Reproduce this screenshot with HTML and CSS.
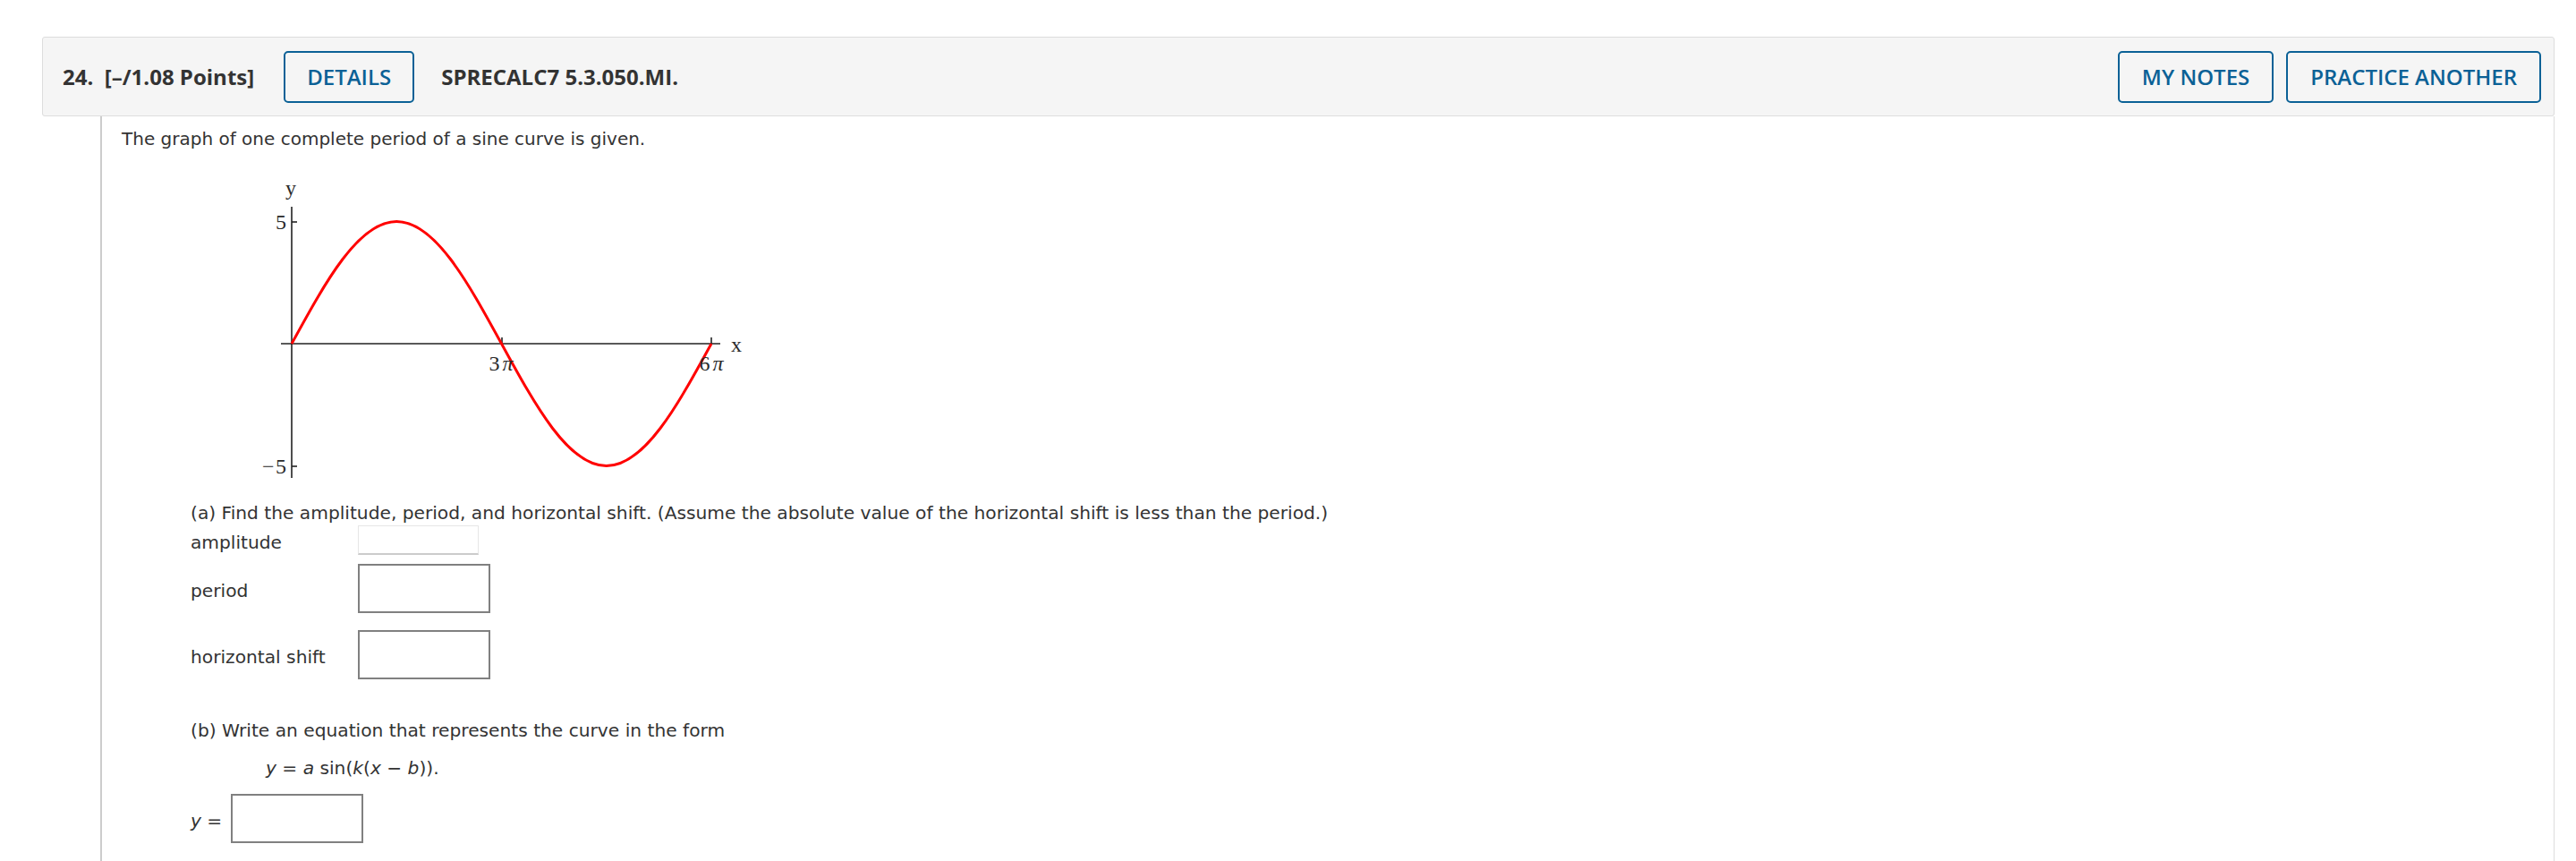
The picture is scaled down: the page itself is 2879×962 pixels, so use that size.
FILE: index.html
```html
<!DOCTYPE html>
<html lang="en">
<head>
<meta charset="utf-8">
<title>Question 24</title>
<link rel="stylesheet" href="styles.css">
</head>
<body>
<div class="question">
  <div class="qhead">
    <span class="qnum">24.&nbsp; [–/1.08 Points]</span>
    <button class="btn btn-details">DETAILS</button>
    <span class="qcode">SPRECALC7 5.3.050.MI.</span>
    <span class="spacer"></span>
    <button class="btn">MY NOTES</button>
    <button class="btn">PRACTICE ANOTHER</button>
  </div>
  <div class="qbody">
    <p class="intro">The graph of one complete period of a sine curve is given.</p>
    <svg class="graph" width="570" height="350" viewBox="0 0 570 350">
      <g class="axes">
        <line x1="46" y1="40" x2="46" y2="343"/>
        <line x1="34" y1="193" x2="525" y2="193"/>
        <line x1="46" y1="57" x2="52" y2="57"/>
        <line x1="46" y1="330" x2="52" y2="330"/>
        <line x1="281" y1="186" x2="281" y2="193"/>
        <line x1="515" y1="186" x2="515" y2="193"/>
      </g>
      <path class="curve" d="M46 193 C84.24 123.07 120.81 56.5 163.25 56.5 C205.69 56.5 242.26 123.07 280.5 193 C318.74 262.93 355.31 329.5 397.75 329.5 C440.19 329.5 476.76 262.93 515 193"/>
      <g class="labels">
        <text x="45" y="27" text-anchor="middle">y</text>
        <text x="40" y="65" text-anchor="end">5</text>
        <text x="13" y="338">−</text>
        <text x="40" y="338" text-anchor="end">5</text>
        <text x="280" y="223" text-anchor="middle">3<tspan class="pi" dx="3">π</tspan></text>
        <text x="515" y="223" text-anchor="middle">6<tspan class="pi" dx="3">π</tspan></text>
        <text x="543" y="202" text-anchor="middle">x</text>
      </g>
    </svg>
    <div class="part">
      <p class="ptext">(a) Find the amplitude, period, and horizontal shift. (Assume the absolute value of the horizontal shift is less than the period.)</p>
      <div class="row row-amp"><span class="lbl">amplitude</span><span class="box box-light"></span></div>
      <div class="row row-period"><span class="lbl">period</span><span class="box"></span></div>
      <div class="row row-shift"><span class="lbl">horizontal shift</span><span class="box"></span></div>
      <p class="ptext ptext-b">(b) Write an equation that represents the curve in the form</p>
      <p class="formula"><i>y</i> = <i>a</i> sin(<i>k</i>(<i>x</i> − <i>b</i>)).</p>
      <div class="row row-y"><span class="lbl lbl-y"><i>y</i> =</span><span class="box"></span></div>
    </div>
  </div>
</div>
</body>
</html>
```

FILE: styles.css
```css
html, body {
  margin: 0;
  padding: 0;
  background: #ffffff;
}

body {
  font-family: "DejaVu Sans", Verdana, sans-serif;
  color: #333333;
}

.question {
  margin: 41px 24px 0 47px;
  width: 2808px;
}

.qhead {
  display: flex;
  align-items: center;
  height: 87px;
  background: #f5f5f5;
  border: 1px solid #dddddd;
  border-radius: 3px;
  padding: 0 14px 0 22px;
  font-family: "Open Sans", "Liberation Sans", sans-serif;
  font-size: 24px;
  color: #333333;
}

.qnum {
  font-weight: 700;
  white-space: pre;
}

.qcode {
  font-weight: 700;
  margin-left: 30px;
}

.spacer {
  flex: 1;
}

.btn {
  height: 58px;
  box-sizing: border-box;
  padding: 0 25px;
  background: transparent;
  border: 2.5px solid #0b6196;
  border-radius: 5px;
  color: #0b6196;
  font-family: "Open Sans", "Liberation Sans", sans-serif;
  font-size: 24px;
  font-weight: 600;
  margin-left: 14px;
  cursor: pointer;
}

.btn-details {
  margin-left: 33px;
  padding: 0 24px;
}

.qbody {
  margin-left: 65px;
  border-left: 2px solid #cccccc;
  border-right: 1px solid #dddddd;
  padding: 13px 0 40px 22px;
  min-height: 800px;
}

.intro {
  margin: 0;
  font-size: 20px;
  line-height: 24px;
}

.graph {
  display: block;
  margin: 24px 0 0 144px;
}

.axes line {
  stroke: #222222;
  stroke-width: 1.6;
}

.curve {
  fill: none;
  stroke: #ff0000;
  stroke-width: 3;
}

.labels text {
  font-family: "Liberation Serif", "DejaVu Serif", serif;
  font-size: 24px;
  fill: #2a2a2a;
}

.labels .pi {
  font-style: italic;
}

.part {
  padding-left: 77px;
  font-size: 20.2px;
}

.ptext {
  margin: 20px 0 0 0;
  line-height: 24px;
}

.row {
  display: flex;
  align-items: center;
}

.lbl {
  width: 187px;
  padding-top: 5px;
}

.box {
  display: block;
  box-sizing: border-box;
  width: 148px;
  height: 55px;
  border: 2px solid #808080;
  background: #ffffff;
}

.box-light {
  width: 135px;
  height: 33px;
  border: 1px solid #e6e6e6;
  border-bottom: 2px solid #cccccc;
}

.row-amp {
  margin-top: 2px;
}

.row-period {
  margin-top: 10px;
}

.row-shift {
  margin-top: 19px;
}

.ptext-b {
  margin-top: 45px;
}

.formula {
  margin: 18px 0 0 84px;
  line-height: 24px;
}

.row-y {
  margin-top: 17px;
}

.lbl-y {
  width: auto;
  margin-right: 10px;
}
```
